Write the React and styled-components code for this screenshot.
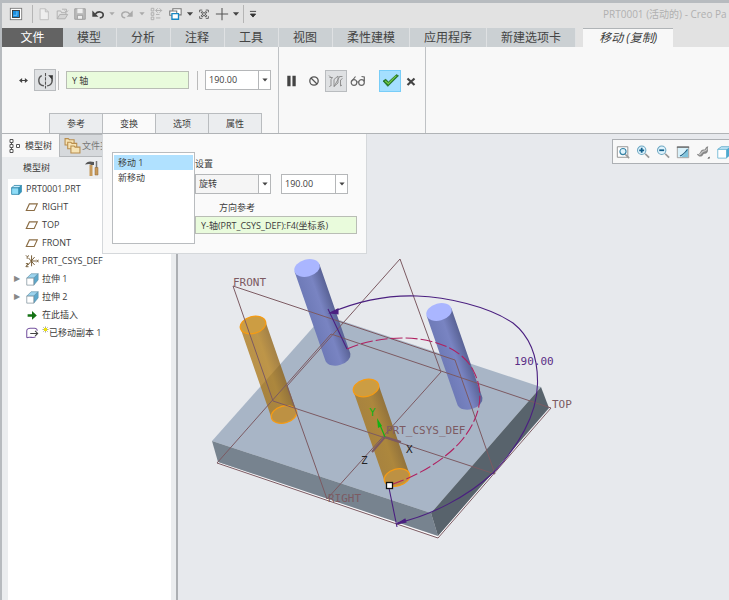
import { useState } from 'react';
import styled, { createGlobalStyle } from 'styled-components';

const quickTools = [
    { icon: 'app', label: 'Creo', w: 28 },
    { sep: true },
    { icon: 'file', label: '新建', w: 18 },
    { icon: 'open', label: '打开', w: 18 },
    { icon: 'save', label: '保存', w: 18 },
    { icon: 'undo', label: '撤消', w: 18 },
    { icon: 'caretLight', label: '撤消列表', w: 10 },
    { icon: 'redo', label: '重做', w: 20 },
    { icon: 'caretLight', label: '重做列表', w: 10 },
    { icon: 'regen', label: '重新生成', w: 18 },
    { icon: 'windows', label: '窗口', w: 20 },
    { icon: 'caret', label: '窗口列表', w: 10 },
    { icon: 'closeWin', label: '关闭', w: 18 },
    { icon: 'plus', label: '添加', w: 18 },
    { icon: 'caret', label: '添加列表', w: 10 },
    { sep: true },
    { icon: 'customize', label: '自定义', w: 14 },
];

const ribbonTabs = [
    { text: '模型' },
    { text: '分析' },
    { text: '注释' },
    { text: '工具' },
    { text: '视图' },
    { text: '柔性建模', tight: true },
    { text: '应用程序', tight: true },
    { text: '新建选项卡', tight: true },
];

const treeItems = [
    { icon: 'part', text: 'PRT0001.PRT', root: true },
    { icon: 'plane', text: 'RIGHT' },
    { icon: 'plane', text: 'TOP' },
    { icon: 'plane', text: 'FRONT' },
    { icon: 'csys', text: 'PRT_CSYS_DEF' },
    { icon: 'extrude', text: '拉伸 1', open: true },
    { icon: 'extrude', text: '拉伸 2', open: true },
    { icon: 'insert', text: '在此插入' },
    { icon: 'moved', text: '已移动副本 1', fresh: true },
];

const viewTools = [
    { icon: 'zoomFit', label: '重新调整' },
    { icon: 'zoomIn', label: '放大' },
    { icon: 'zoomOut', label: '缩小' },
    { icon: 'repaint', label: '重画' },
    { icon: 'render', label: '渲染' },
    { icon: 'cube', label: '显示样式' },
];

const icons = {
    app: (
        <>
            <rect x="1.500" y="1.500" width="13" height="13" fill="#fff" stroke="#777" />
            <rect x="4" y="4" width="8" height="8" fill="#1a8fe0" stroke="#333" />
            <path d="M5 9.500h4V5" fill="none" stroke="#7cc8ff" />
        </>
    ),
    file: <path d="M3.500 2h6l3.500 3.500V14.500H3.500z M9.500 2v3.500H13" fill="#eee" stroke="#bbb" />,
    open: (
        <>
            <path d="M2.500 13.500v-9h4l1 2h5v2" fill="none" stroke="#aaa" />
            <path d="M2.500 13.500l3-5h9l-3 5z" fill="#d4d4d4" stroke="#aaa" />
            <path d="M8 2.500h5v3M11 4l2 2 2-2" fill="none" stroke="#aaa" />
        </>
    ),
    save: (
        <>
            <path d="M2 2h12v12H2z" fill="#bbb" stroke="#999" />
            <path d="M5 2h6v5H5z" fill="#eee" />
            <path d="M5 9.500h6V14H5z" fill="#eee" stroke="#999" />
        </>
    ),
    undo: (
        <>
            <path d="M5 8c3-4 9-2.500 9 1 0 2-1.500 3-4 3.500" fill="none" stroke="#444" strokeWidth="1.800" />
            <path d="M1.500 4v7h7z" fill="#444" />
        </>
    ),
    redo: (
        <>
            <path d="M11 8C8 4 2 5.500 2 9c0 2 1.500 3 4 3.500" fill="none" stroke="#aaa" strokeWidth="1.600" />
            <path d="M14.500 4v7h-7z" fill="#aaa" />
        </>
    ),
    caret: <path d="M4.500 6h7L8 10z" fill="#444" />,
    caretLight: <path d="M5 6h6l-3 3.500z" fill="#aaa" />,
    customize: <path d="M4.500 5h7M5 8h6l-3 3.500z" fill="#333" stroke="#333" />,
    regen: (
        <g fill="none" stroke="#aaa">
            <path d="M2.500 1.500h3v3h-3zM2.500 6.500h3v3h-3zM2.500 11.500h3v3h-3zM8 8.500h4M8 12.500h5M8 4h6.500" />
            <path d="M10 1.500L7.500 4 10 6.500M12 1.500L14.500 4 12 6.500" />
        </g>
    ),
    windows: (
        <g fill="#fff" strokeWidth="1.200">
            <path d="M5.500 2h9.500v7H5.500z" stroke="#777" />
            <path d="M2 4.500h8v5H2z" stroke="#777" />
            <path d="M4.500 7.500H12v6.500H4.500z" stroke="#1687c4" strokeWidth="1.500" />
        </g>
    ),
    closeWin: (
        <g fill="none" stroke="#555">
            <path d="M6 3.500H3v2.500M10 3.500h3v2.500M6 13H3v-2.500M10 13h3v-2.500" />
            <path d="M5 5.500l6 5.500M11 5.500L5 11" strokeWidth="2.400" />
            <path d="M5.500 6l5 4.500M10.500 6l-5 4.500" stroke="#fff" strokeWidth=".8" />
        </g>
    ),
    plus: <path d="M8 1v14M1 8h14" fill="none" stroke="#555" strokeWidth="1.200" />,
    move: (
        <>
            <path d="M3 8h10" stroke="#444" strokeWidth="1.500" />
            <path d="M1.500 8L6 4.500v7zM14.500 8L10 4.500v7z" fill="#444" />
        </>
    ),
    rotate: (
        <g fill="none" stroke="#555">
            <path d="M4.500 3.500C.5 5.500.5 12.500 6.500 13M9.500 13c5-.5 6-6 3.500-8.500" strokeWidth="1.300" />
            <path d="M8 1v14.500" strokeDasharray="3 1" />
            <path d="M10.500 3h4.500l-.5 4z" fill="#333" stroke="none" />
        </g>
    ),
    pause: <path d="M3.500 3h3.500v11H3.500zM9 3h3.500v11H9z" fill="#444" />,
    none: (
        <g fill="none" stroke="#555" strokeWidth="1.300">
            <circle cx="8" cy="8" r="4.200" />
            <path d="M5 5l6 6" />
        </g>
    ),
    preview: (
        <g fill="none" stroke="#888" strokeWidth=".9">
            <path d="M1.500 4.500h3l-1.500 2v6.500M6 13.500V6.500l4-3.500v7zM12 3.500h2.500M14.500 5.500L12.500 7v6l1.500-1M1 2.500l2 2M2.500 12.500l-1 1.500" />
            <path d="M6 13.500L12 3" />
        </g>
    ),
    glasses: (
        <g fill="none" stroke="#666" strokeWidth="1.200">
            <circle cx="4" cy="9.500" r="2.800" />
            <circle cx="11.500" cy="9.500" r="2.800" />
            <path d="M1.500 8.500l4-5M7 9h2M14.300 8.500V4l-2.800-.5" />
        </g>
    ),
    check: (
        <>
            <path d="M1 8.500L5.500 13.500 15.500 3.500 13.500 2.500 6 9.500 3.500 6.800z" fill="#258325" stroke="#1a641c" strokeWidth=".7" />
            <path d="M3 8.500l3 2.500 7.500-7.500" fill="none" stroke="#79c94a" />
        </>
    ),
    cancel: <path d="M4.500 5.500l7 6.500M11.500 5.500l-7 6.500" fill="none" stroke="#444" strokeWidth="2.200" />,
    treeTab: (
        <g fill="#fff" stroke="#555">
            <path d="M4.500 3v10" />
            <path d="M3 1.500h3v3H3zM3 6.500h3v3H3zM3 11.500h3v3H3zM9.500 6.500h3v3h-3z" />
        </g>
    ),
    folders: (
        <g fill="#f6e3b4" stroke="#b88d4d">
            <path d="M1 1.500h3l1 1h4.500v5H1z" />
            <path d="M3.500 5h3l1 1H12v5H3.500z" />
            <path d="M6.500 8.500h3l1 1h4.500v5.500H6.500z" />
        </g>
    ),
    tools: (
        <>
            <path d="M1 4.500c2-3.500 5-3.500 9-2.500v3H7.500L5 4z" fill="#555" />
            <path d="M5.500 5h3v11h-3z" fill="#c79a5b" />
            <path d="M12.500 1v7" stroke="#777" strokeWidth="1.500" />
            <path d="M11 7.500h3V15h-3z" fill="#c79a5b" stroke="#8c6737" strokeWidth=".5" />
        </>
    ),
    part: (
        <>
            <path d="M2 6l3-3h9l-3 3z" fill="#ccefff" stroke="#2f86aa" />
            <path d="M2 6h9v8H2z" fill="#8edcf7" stroke="#2f86aa" />
            <path d="M11 6l3-3v8l-3 3z" fill="#3599c2" stroke="#2f86aa" />
        </>
    ),
    plane: <path d="M5 4.500h9l-3.500 7.500h-9z" fill="#fff" stroke="#8b6d45" strokeWidth="1.300" />,
    csys: (
        <g fill="none" stroke="#735933" strokeWidth="1.100">
            <path d="M7.500 1.500V14M3 13l8-9.500M4 4.500l7 8M1 1.500l2 2 1-2M2.500 3.500V5.500M1 11h2.500l-2.500 3.500h3M13 6.500l2.500 3M15.500 6.500l-2.500 3M7.500 8h5" />
        </g>
    ),
    extrude: (
        <>
            <path d="M2 7l5-5h8l-5 5z" fill="#9cd4ee" stroke="#6695ac" strokeWidth=".8" />
            <path d="M10 7l5-5v7l-5 6z" fill="#5ba8cc" stroke="#6695ac" strokeWidth=".8" />
            <path d="M2 7h8v8H2z" fill="#fff" stroke="#7a8d98" strokeWidth=".8" />
        </>
    ),
    insert: <path d="M3 7h5V3.500L13.500 8.500 8 13.500V10H3z" fill="#147214" />,
    moved: (
        <>
            <path d="M2 13.500v-8c0-2 2-3 4-3h5c2 0 3 2 3 3M2 13.500c3-2 7 1 10-1" fill="none" stroke="#7654a0" strokeWidth="1.200" />
            <path d="M6 8.500h8.500M11.500 5.500l3 3-3 3" fill="none" stroke="#444" strokeWidth="1.200" />
        </>
    ),
    zoomFit: (
        <>
            <path d="M1.500 2h12v12h-12z" fill="#fff" stroke="#888" />
            <circle cx="8" cy="7.500" r="3.500" fill="#dff3fc" stroke="#3683a6" strokeWidth="1.300" />
            <path d="M10.500 10.500l4.500 4.500" stroke="#999" strokeWidth="1.800" />
        </>
    ),
    zoomIn: (
        <>
            <circle cx="6.500" cy="6" r="4.800" fill="#dff3fc" stroke="#6da7c2" strokeWidth="1.200" />
            <path d="M3.700 6h5.600M6.500 3.200v5.600" stroke="#135f8a" strokeWidth="2" />
            <path d="M10.500 10l4.500 4.500" stroke="#999" strokeWidth="2" />
        </>
    ),
    zoomOut: (
        <>
            <circle cx="6.500" cy="6" r="4.800" fill="#dff3fc" stroke="#6da7c2" strokeWidth="1.200" />
            <path d="M3.700 6h5.600" stroke="#135f8a" strokeWidth="2" />
            <path d="M10.500 10l4.500 4.500" stroke="#999" strokeWidth="2" />
        </>
    ),
    repaint: (
        <>
            <path d="M2 2h12v12H2z" fill="#d9f1fa" />
            <path d="M14 3v11H4c5-1 7-6 10-11z" fill="#7fc4dd" />
            <path d="M1.500 2v12.500h13V2z" fill="none" stroke="#999" />
            <path d="M1 2.500h14" stroke="#666" strokeWidth="1.400" />
            <path d="M4.500 12.500c4-1 6-4 8.500-7.500" stroke="#1c5f82" strokeWidth="1.300" fill="none" />
        </>
    ),
    render: (
        <>
            <path d="M1 10c2 1 3 0 4-2 1-3 3-3 5-3 1-1 1-3 4-3.500-1 2 1 6-2 8-2 1-3 0-4 2-2 3-6 2-7-1.500z" fill="#888" />
            <path d="M3 11c3 1 3-4 6-4 2 0 3-1 4-3" fill="none" stroke="#c9c9c9" strokeWidth="1.300" />
            <path d="M13 15.500l2.500-2.500v2.500z" fill="#333" />
        </>
    ),
    cube: (
        <>
            <path d="M2 5l4-3h10v3z" fill="#c7eafa" stroke="#5aa7c8" />
            <path d="M2 5h10v10H2z" fill="#fff" stroke="#6fb7d5" />
            <path d="M12 5l4-3v10l-4 3z" fill="#4ea9d0" />
        </>
    ),
    spark: (
        <>
            <path d="M3 3l10 10M13 3L3 13M8 1v14M1 8h14" stroke="#777" strokeWidth="1.500" />
            <circle cx="8" cy="8" r="4" fill="#f1e600" />
        </>
    ),
};

const Icon = ({ name, size = 14 }) => (
    <svg width={size} height={size} viewBox="0 0 16 16" aria-hidden="true">
        {icons[name]}
    </svg>
);

const Combo = ({ value, width, label, muted }) => (
    <ComboBox $width={width}>
        <ComboSelect aria-label={label} $muted={muted} defaultValue={value}>
            <option>{value}</option>
        </ComboSelect>
        <ComboCaret>
            <Icon name="caret" size={12} />
        </ComboCaret>
    </ComboBox>
);

const Cylinder = ({ x, y, ghost }) => (
    <g transform={`translate(${x} ${y})`}>
        <path
            d="M-12.400 3.700L18.600 93.200A13 8.500 -15 0 0 43.400 85.800L12.400 -3.700Z"
            fill={ghost ? 'url(#ghostBody)' : 'url(#solidBody)'}
            opacity={ghost ? 0.72 : 1}
        />
        <ellipse
            rx="13"
            ry="8.500"
            transform="rotate(-15)"
            fill={ghost ? '#cc9d43' : '#aab6ff'}
            stroke={ghost ? '#f59b14' : 'none'}
            strokeWidth="1.300"
        />
        {ghost && (
            <ellipse
                rx="13"
                ry="8.500"
                transform="translate(31 89.500) rotate(-15)"
                fill="#bd9143"
                stroke="#f59b14"
                strokeWidth="1.300"
            />
        )}
    </g>
);

const Model = () => (
    <Drawing viewBox="178 134 551 466" role="img" aria-label="PRT0001">
        <defs>
            <linearGradient id="solidBody" gradientUnits="userSpaceOnUse" x1="-8" y1="48" x2="38" y2="32">
                <stop offset="0.230" stopColor="#6f7bb8" />
                <stop offset="0.500" stopColor="#7984c2" />
                <stop offset="0.770" stopColor="#565f91" />
            </linearGradient>
            <linearGradient id="ghostBody" gradientUnits="userSpaceOnUse" x1="-8" y1="48" x2="38" y2="32">
                <stop offset="0.230" stopColor="#a8700a" />
                <stop offset="0.500" stopColor="#ae7508" />
                <stop offset="0.770" stopColor="#865606" />
            </linearGradient>
        </defs>

        <path d="M212 441L324 315 541 387 431 513z" fill="#a8b5c6" />
        <path d="M212 441L431 513 438 536 218 462z" fill="#77838f" />
        <path d="M431 513L541 387 549 408 438 536z" fill="#58636c" />

        <Cylinder x={307} y={268} />
        <Cylinder x={439} y={312} />
        <Cylinder x={253} y={325} ghost />
        <Cylinder x={366} y={388} ghost />

        <g fill="none" stroke="#7c5a62" strokeWidth="1">
            <path d="M218 463L438 537 550 409" stroke="#fff" />
            <path d="M331 334L217 463 438 538 551 408z" />
            <path d="M233 286L455 360 495 474 273 401z" />
            <path d="M400 259L287 386 327 499 441 372z" />
        </g>
        <path d="M385 437L401 442 M385 437L372 452" stroke="#7c5a62" strokeWidth="2" />

        <g fill="none" stroke="#4b2080" strokeWidth="1.100">
            <path d="M330 313C358 301 388 295 417 296C446 297 488 306 513 323C532 338 538 360 537.500 384C537 415 518 447 493 473C467 497 430 516 397 523" />
            <path d="M328 309L347 349M389 488L397 527" />
            <path d="M330 313l8-4v5zM397 524l8-5 1 3z" fill="#4b2080" />
        </g>
        <path
            d="M347 349C365 341 385 338 405 338C440 339 465 352 474 372C484 392 482 415 462 440C447 458 420 475 393 484"
            fill="none"
            stroke="#b02060"
            strokeWidth="1.100"
            strokeDasharray="12 3"
        />
        <rect x="386.500" y="482.500" width="6" height="6" fill="#fff" stroke="#111" strokeWidth="1.300" />

        <path d="M385 437L380 425" stroke="#12b312" strokeWidth="1.200" />
        <path d="M377 418l5 8-4 2z" fill="#12b312" />

        <ModelText x="233" y="286">FRONT</ModelText>
        <ModelText x="552" y="408">TOP</ModelText>
        <ModelText x="328" y="502">RIGHT</ModelText>
        <ModelText x="386" y="434">PRT_CSYS_DEF</ModelText>
        <ModelText x="514" y="365" $color="#5a2d85">190.00</ModelText>
        <ModelText x="369" y="416" $color="#12b312">Y</ModelText>
        <ModelText x="406" y="453" $color="#222">X</ModelText>
        <ModelText x="361" y="464" $color="#222">Z</ModelText>
    </Drawing>
);

const App = () => {
    const [move, setMove] = useState(0);

    return (
        <Window>
            <GlobalStyle />
            <QuickBar>
                {quickTools.map((tool, index) =>
                    tool.sep ? (
                        <QuickSep key={index} />
                    ) : (
                        <ToolButton key={index} $w={tool.w} aria-label={tool.label}>
                            <Icon name={tool.icon} />
                        </ToolButton>
                    )
                )}
                <Title>PRT0001 (活动的) - Creo Pa</Title>
            </QuickBar>

            <TabBar>
                <FileTab>文件</FileTab>
                {ribbonTabs.map((tab) => (
                    <RibbonTab key={tab.text} $tight={tab.tight}>{tab.text}</RibbonTab>
                ))}
                <ActiveTab>移动 (复制)</ActiveTab>
            </TabBar>

            <Ribbon>
                <Dashboard>
                    <DashRow>
                        <ToolButton $w={22} aria-label="平移">
                            <Icon name="move" size={11} />
                        </ToolButton>
                        <PressedButton aria-label="旋转">
                            <Icon name="rotate" size={17} />
                        </PressedButton>
                        <DashSep />
                        <Collector $width={123} aria-label="参考轴" defaultValue="Y 轴" />
                        <DashSep />
                        <Combo value="190.00" width={66} label="角度" />
                    </DashRow>
                    <SubTabs>
                        <SubTab>参考</SubTab>
                        <SubTab $active>变换</SubTab>
                        <SubTab>选项</SubTab>
                        <SubTab>属性</SubTab>
                    </SubTabs>
                </Dashboard>
                <Confirm>
                    <ToolButton $w={24} aria-label="暂停">
                        <Icon name="pause" size={15} />
                    </ToolButton>
                    <ToolButton $w={22} aria-label="无预览">
                        <Icon name="none" size={16} />
                    </ToolButton>
                    <PressedButton aria-label="连接预览">
                        <Icon name="preview" size={16} />
                    </PressedButton>
                    <ToolButton $w={22} aria-label="校验">
                        <Icon name="glasses" size={16} />
                    </ToolButton>
                    <OkButton aria-label="确定">
                        <Icon name="check" size={17} />
                    </OkButton>
                    <ToolButton $w={20} aria-label="取消">
                        <Icon name="cancel" size={16} />
                    </ToolButton>
                </Confirm>

                <TransformPanel>
                    <MoveList>
                        {['移动 1', '新移动'].map((text, index) => (
                            <li key={text}>
                                <MoveItem $selected={move === index} onClick={() => setMove(index)}>
                                    {text}
                                </MoveItem>
                            </li>
                        ))}
                    </MoveList>
                    <Settings>
                        <div>设置</div>
                        <SettingRow>
                            <Combo value="旋转" width={76} label="设置" muted />
                            <Combo value="190.00" width={67} label="旋转角度" />
                        </SettingRow>
                        <DirectionLabel htmlFor="direction">方向参考</DirectionLabel>
                        <Collector id="direction" $width={162} defaultValue="Y-轴(PRT_CSYS_DEF):F4(坐标系)" />
                    </Settings>
                </TransformPanel>
            </Ribbon>

            <Body>
                <Navigator>
                    <NavTabs>
                        <NavTab $active>
                            <Icon name="treeTab" size={16} />
                            模型树
                        </NavTab>
                        <NavTab>
                            <Icon name="folders" size={17} />
                            文件夹浏览器
                        </NavTab>
                    </NavTabs>
                    <NavHeader>
                        模型树
                        <ToolButton $w={18} aria-label="设置">
                            <Icon name="tools" size={16} />
                        </ToolButton>
                    </NavHeader>
                    <Tree>
                        {treeItems.map((item) => (
                            <TreeRow key={item.text} $root={item.root}>
                                {!item.root && <Expander>{item.open ? '▶' : ''}</Expander>}
                                <Icon name={item.icon} size={item.root ? 13 : 14} />
                                <TreeText>
                                    {item.fresh && <Icon name="spark" size={7} />}
                                    {item.text}
                                </TreeText>
                            </TreeRow>
                        ))}
                    </Tree>
                </Navigator>
                <Viewport>
                    <Model />
                    <ViewBar>
                        {viewTools.map((tool) => (
                            <ToolButton key={tool.icon} $w={20} aria-label={tool.label}>
                                <Icon name={tool.icon} size={14} />
                            </ToolButton>
                        ))}
                    </ViewBar>
                </Viewport>
            </Body>
        </Window>
    );
};

const GlobalStyle = createGlobalStyle`
    * {
        box-sizing: border-box;
    }

    body {
        margin: 0;
        color: #3c3c3c;
        font: 9px/14px "Open Sans", "Noto Sans CJK SC", sans-serif;
    }

    button, input, select {
        margin: 0;
        padding: 0;
        border: 0;
        border-radius: 0;
        background: none;
        color: inherit;
        font: inherit;
    }

    ul {
        margin: 0;
        padding: 0;
        list-style: none;
    }

    svg {
        display: block;
        flex: none;
    }
`;

const Window = styled.div`
    display: flex;
    flex-direction: column;
    min-height: 100vh;
    overflow: hidden;
    border-top: 3px solid #b7bbbf;
    border-left: 2px solid #b7bbbf;
    background-color: #e2e2e2;
`;

const QuickBar = styled.header`
    display: flex;
    align-items: center;
    height: 25px;
    padding-bottom: 3px;
`;

const QuickSep = styled.span`
    width: 1px;
    height: 18px;
    margin: 0 2px;
    background-color: #b5b5b5;
`;

const ToolButton = styled.button`
    display: flex;
    flex: none;
    align-items: center;
    justify-content: center;
    width: ${(props) => props.$w}px;
    height: 20px;
`;

const Title = styled.div`
    flex: 0 0 126px;
    margin-left: auto;
    color: #b0b0b0;
    font-size: 10px;
    white-space: nowrap;
`;

const TabBar = styled.nav`
    display: flex;
    height: 19px;
    font-size: 12px;
    line-height: 18px;
    white-space: nowrap;
`;

const RibbonTab = styled.button`
    padding: ${(props) => (props.$tight ? '0 14px' : '0 15px 0 14px')};
    border-right: 1px solid #dfe1e3;
    background-color: #cbd0d3;
    color: #444;
`;

const FileTab = styled.button`
    width: 61px;
    background-color: #636363;
    color: #fff;
`;

const ActiveTab = styled.button`
    width: 90px;
    margin-left: 7px;
    border-top: 1px solid #b0b4b7;
    background-color: #f8f8f8;
    font-style: italic;
`;

const Ribbon = styled.section`
    position: relative;
    display: flex;
    height: 87px;
    border-bottom: 1px solid #b0b3b6;
    background-color: #f8f8f8;
`;

const Dashboard = styled.div`
    display: flex;
    flex-direction: column;
    width: 277px;
    border-right: 1px solid #bfc2c5;
`;

const DashRow = styled.div`
    display: flex;
    flex: 1;
    align-items: center;
    padding-left: 10px;
`;

const PressedButton = styled.button`
    display: flex;
    align-items: center;
    justify-content: center;
    width: 22px;
    height: 22px;
    border: 1px solid #b9bcbf;
    background-color: #dfe1e3;
`;

const OkButton = styled(PressedButton)`
    margin-left: 10px;
    border-color: #78cdf8;
    background-color: #a4dfff;
`;

const DashSep = styled.span`
    width: 1px;
    height: 19px;
    margin: 0 7px 0 8px;
    background-color: #bbb;

    ${PressedButton} + & {
        margin-left: 2px;
    }
`;

const Collector = styled.input`
    width: ${(props) => props.$width}px;
    height: 18px;
    padding: 0 5px;
    border: 1px solid #b9bdb5;
    background-color: #e9fbdc;
`;

const ComboBox = styled.span`
    position: relative;
    display: flex;
    width: ${(props) => props.$width}px;
    height: 20px;
    border: 1px solid #b5b7b9;
    background-color: #fff;
`;

const ComboSelect = styled.select`
    flex: 1;
    padding: 0 15px 0 3px;
    appearance: none;
    background-color: ${(props) => (props.$muted ? '#f5f5f5' : '#fff')};
`;

const ComboCaret = styled.span`
    position: absolute;
    top: 0;
    right: 0;
    bottom: 0;
    display: flex;
    align-items: center;
    justify-content: center;
    width: 12px;
    border-left: 1px solid #b5b7b9;
    background-color: #fff;
    pointer-events: none;
`;

const SubTabs = styled.div`
    display: flex;
    height: 20px;
    padding-left: 47px;
`;

const SubTab = styled.button`
    width: 54px;
    margin-right: -1px;
    border: 1px solid #b9bcbf;
    border-bottom: 0;
    background-color: ${(props) => (props.$active ? '#fafafa' : '#ebedef')};
`;

const Confirm = styled.div`
    display: flex;
    align-items: center;
    width: 147px;
    padding: 0 0 19px;
    border-right: 1px solid #bfc2c5;
`;

const TransformPanel = styled.div`
    position: absolute;
    top: 100%;
    left: 100px;
    z-index: 2;
    display: flex;
    margin-top: 1px;
    padding: 18px 9px 9px;
    border: 1px solid #d5d8db;
    border-top: 0;
    background-color: #fafafa;
`;

const MoveList = styled.ul`
    width: 83px;
    height: 92px;
    padding: 2px 1px;
    border: 1px solid #b9bcbf;
    background-color: #fff;
`;

const MoveItem = styled.button`
    width: 100%;
    height: 15px;
    padding-left: 4px;
    background-color: ${(props) => (props.$selected ? '#b0e1ff' : 'transparent')};
    text-align: left;
`;

const Settings = styled.div`
    display: flex;
    flex-direction: column;
    padding-top: 5px;
`;

const SettingRow = styled.div`
    display: flex;
    gap: 10px;
    margin: 3px 0 7px;
`;

const DirectionLabel = styled.label`
    margin-bottom: 1px;
    padding-left: 24px;
`;

const Body = styled.main`
    display: flex;
    flex: 1;
`;

const Navigator = styled.aside`
    display: flex;
    flex: none;
    flex-direction: column;
    width: 176px;
    border-right: 2px solid #acafb3;
    background-color: #ebedef;
`;

const NavTabs = styled.div`
    display: flex;
    height: 23px;
    overflow: hidden;
`;

const NavTab = styled.button`
    display: flex;
    flex: none;
    align-items: center;
    gap: ${(props) => (props.$active ? 2 : 1)}px;
    width: ${(props) => (props.$active ? 57 : 117)}px;
    padding-left: ${(props) => (props.$active ? 5 : 4)}px;
    border: ${(props) => (props.$active ? 0 : '1px solid #b5b8bb')};
    background-color: ${(props) => (props.$active ? '#f8f8f8' : '#d6d9dc')};
    color: ${(props) => (props.$active ? 'inherit' : '#777')};
    white-space: nowrap;
`;

const NavHeader = styled.div`
    display: flex;
    align-items: center;
    gap: 33px;
    height: 22px;
    padding-left: 21px;
`;

const Tree = styled.ul`
    flex: 1;
    margin: 0 5px 0 6px;
    padding-top: 1px;
    background-color: #fff;
`;

const TreeRow = styled.li`
    display: flex;
    align-items: center;
    gap: ${(props) => (props.$root ? 3 : 3)}px;
    height: 18px;
    padding-left: ${(props) => (props.$root ? 2 : 6)}px;
    white-space: nowrap;
`;

const Expander = styled.span`
    width: 8px;
    color: #888;
    font: 8px/18px "DejaVu Sans", sans-serif;
`;

const TreeText = styled.span`
    display: flex;
`;

const Viewport = styled.section`
    position: relative;
    flex: 1;
    min-width: 0;
    overflow: hidden;
    background-color: #e7e9ed;
`;

const Drawing = styled.svg`
    width: 100%;
`;

const ModelText = styled.text`
    fill: ${(props) => props.$color || '#7c5a62'};
    font: 11px "DejaVu Sans Mono", monospace;
`;

const ViewBar = styled.div`
    position: absolute;
    top: 5px;
    right: 0;
    display: flex;
    align-items: center;
    width: 117px;
    height: 25px;
    overflow: hidden;
    border: 1px solid #adb0b4;
    border-right: 0;
    background-color: #f8f8f8;
`;

export default App;
